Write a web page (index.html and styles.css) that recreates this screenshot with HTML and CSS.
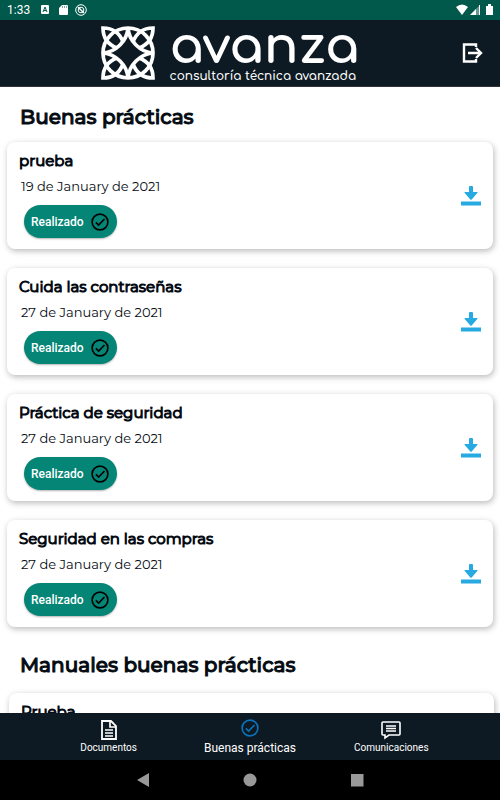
FILE: index.html
```html
<!DOCTYPE html>
<html lang="es">
<head>
<meta charset="utf-8">
<meta name="viewport" content="width=device-width, initial-scale=1">
<title>Avanza - Buenas prácticas</title>
<link rel="stylesheet" href="styles.css">
</head>
<body>
<svg class="defs" aria-hidden="true">
  <symbol id="check" viewBox="0 0 24 24"><circle cx="12" cy="12" r="10.5" fill="none" stroke="currentColor" stroke-width="2.2"/><path d="M6.5 12.5l3.7 3.7L18 8" fill="none" stroke="currentColor" stroke-width="2.2"/></symbol>
  <symbol id="download" viewBox="0 0 20 20"><path d="M8 1q0-1 1-1h2q1 0 1 1v5h4q1 0 .3 1l-5.600 6.500q-.7.700-1.400 0L3.700 7Q3 6 4 6h4zM0 15.500h20v4H0z" fill="currentColor"/></symbol>
</svg>
<div class="status">
  <span class="clock">1:33</span>
  <svg class="status-icon" viewBox="0 0 12 12"><rect x="2" y="1" width="8" height="9" rx="1" fill="#fff"/><path d="M4 8l2-5 2 5M5 6.500h2" fill="none" stroke="#00594b"/></svg>
  <svg class="status-icon" viewBox="0 0 12 12"><path d="M5 1h5q1 0 1 1v8q0 1-1 1H3q-1 0-1-1V4z" fill="#fff"/><path d="M5.500 2v2M7.500 2v2M9.500 2v2" stroke="#00594b" stroke-width=".5"/></svg>
  <svg class="status-icon" viewBox="0 0 12 12"><g fill="none" stroke="#fff"><circle cx="6" cy="6" r="5.300"/><circle cx="6" cy="6" r="2.800"/><path d="M3 3l6 6" stroke-width="1.500"/></g></svg>
  <svg class="signals" viewBox="0 0 38 12"><path d="M0 3q6-5 12 0l-6 8z" fill="#fff"/><path d="M14 11L24 1v10z" fill="#fff" opacity=".4"/><path d="M14 11l6-6v6zM23 1h1v10h-1z" fill="#fff"/><path d="M30 2h2V0h3v2h2v9h-7z" fill="#fff"/></svg>
</div>
<header class="header">
  <div class="brand">
    <svg class="mark" viewBox="0 0 54 54" aria-hidden="true">
      <g fill="none" stroke="#fff" stroke-width="3.700">
        <circle cx="27" cy="27" r="25"/>
        <g id="corner"><path d="M27 2C26 15 15 26 2 27"/><path d="M22 16C19 8 13 2 2 2C2 13 8 19 16 22"/></g>
        <use href="#corner" transform="translate(54 0) scale(-1 1)"/>
        <use href="#corner" transform="translate(0 54) scale(1 -1)"/>
        <use href="#corner" transform="translate(54 54) scale(-1 -1)"/>
      </g>
    </svg>
    <div class="wordmark"><span class="name">avanza</span><span class="tagline">consultoría técnica avanzada</span></div>
  </div>
  <button class="logout" aria-label="Cerrar sesión"><svg viewBox="0 0 22 20"><path d="M14 4V1.500H2v17h12V16M6 10h13M14 5l5 5-5 5" fill="none" stroke="#fff" stroke-width="2.400"/></svg></button>
</header>
<main class="content">
  <h1 class="title">Buenas prácticas</h1>
  <div class="list">
    <article class="card"><div><h2>prueba</h2><p>19 de January de 2021</p><button class="done">Realizado<svg><use href="#check"/></svg></button></div><button class="download" aria-label="Descargar"><svg><use href="#download"/></svg></button></article>
    <article class="card"><div><h2>Cuida las contraseñas</h2><p>27 de January de 2021</p><button class="done">Realizado<svg><use href="#check"/></svg></button></div><button class="download" aria-label="Descargar"><svg><use href="#download"/></svg></button></article>
    <article class="card"><div><h2>Práctica de seguridad</h2><p>27 de January de 2021</p><button class="done">Realizado<svg><use href="#check"/></svg></button></div><button class="download" aria-label="Descargar"><svg><use href="#download"/></svg></button></article>
    <article class="card"><div><h2>Seguridad en las compras</h2><p>27 de January de 2021</p><button class="done">Realizado<svg><use href="#check"/></svg></button></div><button class="download" aria-label="Descargar"><svg><use href="#download"/></svg></button></article>
  </div>
  <h1 class="title">Manuales buenas prácticas</h1>
  <div class="list manuals"><article class="card"><h2>Prueba</h2></article></div>
</main>
<nav class="tabs">
  <a href="#documentos"><svg viewBox="0 0 20 20"><path d="M3 1h9l5 5v13H3z" fill="none" stroke="#fff" stroke-width="1.800"/><path d="M11 1v6h6M6 10h8M6 13h8M6 16h8" fill="none" stroke="#fff" stroke-width="1.700"/></svg>Documentos</a>
  <a class="active" href="#practicas"><svg><use href="#check"/></svg><span>Buenas prácticas</span></a>
  <a href="#comunicaciones"><svg viewBox="0 0 20 20"><path d="M2 2h16q1 0 1 1v11q0 1-1 1H8l-4 3v-3H2q-1 0-1-1V3q0-1 1-1z" fill="none" stroke="#fff" stroke-width="1.600"/><path d="M5 6h10M5 8.500h10M5 11h10" stroke="#fff" stroke-width="1.400"/></svg>Comunicaciones</a>
</nav>
<div class="system">
  <button aria-label="Atrás"><svg viewBox="0 0 14 14"><path d="M13 0v14L1 7z" fill="#999"/></svg></button>
  <button aria-label="Inicio"><svg viewBox="0 0 14 14"><circle cx="7" cy="7" r="6.500" fill="#999"/></svg></button>
  <button aria-label="Recientes"><svg viewBox="0 0 14 14"><path d="M1 1h12.500v12.500H1z" fill="#999"/></svg></button>
</div>
</body>
</html>
```
FILE: styles.css
```css
* { box-sizing: border-box; }
body { margin: 0; height: 100vh; display: flex; flex-direction: column; background: #fff; font-family: Roboto, sans-serif; color: #050b12; overflow: hidden; }
h1, h2, p { margin: 0; }
button { border: 0; padding: 0; background: none; font: inherit; color: inherit; }
svg { display: block; flex: none; }
.defs { position: absolute; width: 0; height: 0; }
.status { flex: none; height: 20px; display: flex; align-items: center; gap: 6px; padding: 0 6px 0 7px; background: #00594b; color: #fff; }
.clock { font-size: 12px; width: 26px; }
.status-icon { width: 12px; height: 12px; }
.signals { width: 38px; height: 12px; margin-left: auto; }
.header { flex: none; height: 67px; display: grid; grid-template-columns: 1fr auto 1fr; align-items: center; padding: 0 16px; background: #0e1a23; border-bottom: 1px solid #34343c; color: #fff; }
.brand { grid-column: 2; display: flex; align-items: center; gap: 15px; margin-right: 40px; }
.mark { width: 54px; height: 54px; }
.wordmark { display: flex; flex-direction: column; padding-top: 4px; font-family: Comfortaa, Quicksand, Inter, sans-serif; }
.name { font-size: 51px; line-height: 42px; font-weight: 700; }
.tagline { font-size: 12px; line-height: 16px; font-weight: 600; }
.logout { justify-self: end; }
.logout svg { width: 22px; height: 20px; }
.content { flex: 1; min-height: 0; overflow: hidden; font-family: Montserrat, Inter, sans-serif; }
.title { padding: 16px 20px 10px; font-size: 20px; line-height: 29px; font-weight: 500; -webkit-text-stroke: 1px currentColor; }
.list { display: flex; flex-direction: column; gap: 19px; padding: 0 7px; margin-bottom: 8px; }
.card { display: flex; justify-content: space-between; height: 107px; padding: 9px 12px; border-radius: 8px; background: #fff; box-shadow: 1px 2px 6px rgba(0, 0, 0, .28); }
.card h2 { font-size: 15px; line-height: 20px; font-weight: 400; -webkit-text-stroke: 1px currentColor; }
.card p { margin: 5px 2px; font-size: 13px; line-height: 20px; }
.done { display: flex; align-items: center; justify-content: space-between; width: 93px; height: 33px; margin: 9px 5px 0; padding: 0 8px 0 7px; border-radius: 17px; background: #048576; box-shadow: 0 1px 2px rgba(0, 0, 0, .3); font: 500 12px Roboto, sans-serif; color: #fff; }
.done svg { width: 18px; height: 18px; color: #000; }
.download { align-self: center; color: #27aae1; }
.download svg { width: 20px; height: 20px; }
.manuals { padding: 3px 6px 0 9px; }
.tabs { flex: none; height: 47px; display: grid; grid-template-columns: repeat(3, 1fr); padding: 0 38px; background: #0e1a23; }
.tabs a { display: flex; flex-direction: column; align-items: center; padding-top: 7px; gap: 1px; color: #fff; text-decoration: none; font-size: 10px; line-height: 14px; }
.tabs svg { width: 20px; height: 20px; }
.tabs .active { padding-top: 6px; gap: 4px; font-size: 12px; }
.tabs .active svg { width: 18px; height: 18px; color: #0b72b9; }
.system { flex: none; height: 40px; display: flex; justify-content: center; align-items: center; gap: 93px; background: #000; }
.system svg { width: 14px; height: 14px; }
```
